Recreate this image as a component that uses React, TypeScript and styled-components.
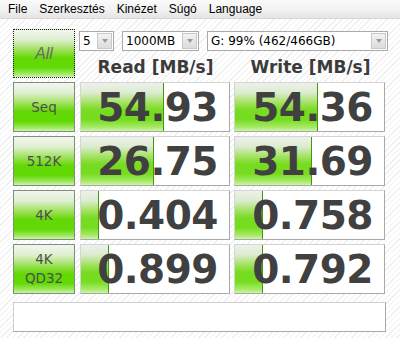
import React from "react";
import styled, { createGlobalStyle } from "styled-components";

const Global = createGlobalStyle`
  html, body { margin: 0; padding: 0; }
  body {
    width: 400px;
    height: 338px;
    overflow: hidden;
    font-family: "DejaVu Sans", sans-serif;
    background-color: #ffffff;
    background-image: repeating-linear-gradient(135deg, #ffffff 0px, #ffffff 3px, #efefef 3px, #efefef 4px);
  }
`;

const Window = styled.div`
  width: 400px;
  height: 338px;
  display: flex;
  flex-direction: column;
`;

const MenuBar = styled.div`
  height: 19px;
  display: flex;
  align-items: center;
  padding-left: 2px;
  background: linear-gradient(to bottom, #fbfbfb 0%, #f0f0f0 60%, #e4e4e4 100%);
  border-bottom: 1px solid #d6d6d6;
  box-sizing: border-box;
`;

const MenuItem = styled.span`
  font-family: "Liberation Sans", sans-serif;
  font-size: 12px;
  color: #000;
  padding: 0 6px;
`;

const Content = styled.div`
  display: flex;
  flex-direction: column;
  padding: 10px 0 0 13px;
`;

const TopRow = styled.div`
  display: flex;
  height: 49px;
`;

const GreenButton = styled.div<{ $focused?: boolean }>`
  width: 62px;
  box-sizing: border-box;
  border: 1px ${(p) => (p.$focused ? "dotted #1a1a1a" : "solid #7d8f77")};
  background: linear-gradient(to bottom, #f4f6f2 0%, #dcefcc 22%, #98e050 44%, #62d804 60%, #62da06 80%, #9ee860 93%, #ccf4a8 100%);
  display: flex;
  flex-direction: column;
  align-items: center;
  justify-content: center;
  color: #4e4e4e;
  font-family: "DejaVu Sans", sans-serif;
  font-size: 13.5px;
  line-height: 19px;
`;

const AllText = styled.span`
  font-style: italic;
  font-size: 16px;
  color: #6a6a6a;
  font-family: "Liberation Sans", sans-serif;
`;

const TopRight = styled.div`
  display: flex;
  flex-direction: column;
  margin-left: 4px;
`;

const ComboRow = styled.div`
  display: flex;
  margin-top: 2px;
  gap: 8px;
`;

const Combo = styled.div<{ $w: number }>`
  width: ${(p) => p.$w}px;
  height: 20px;
  box-sizing: border-box;
  border: 1px solid #a9a9a9;
  background: #fff;
  display: flex;
  align-items: center;
  justify-content: space-between;
  padding-left: 3px;
  padding-right: 1px;
  font-family: "DejaVu Sans", sans-serif;
  font-size: 12px;
  color: #000;
`;

const ComboArrow = styled.div`
  width: 15px;
  height: 16px;
  box-sizing: border-box;
  border: 1px solid #c8c8c8;
  background: linear-gradient(to bottom, #f2f2f2, #dcdcdc);
  display: flex;
  align-items: center;
  justify-content: center;
`;

const Tri = styled.div`
  width: 0;
  height: 0;
  border-left: 3.5px solid transparent;
  border-right: 3.5px solid transparent;
  border-top: 4px solid #9a9a9a;
`;

const HeaderRow = styled.div`
  display: flex;
  margin-top: 5px;
  padding-left: 1px;
  gap: 4px;
`;

const Header = styled.div`
  width: 151px;
  text-align: center;
  font-family: "DejaVu Sans", sans-serif;
  font-weight: bold;
  font-size: 17px;
  line-height: 22px;
  color: #3b3b3b;
`;

const Grid = styled.div`
  display: grid;
  grid-template-columns: 62px 151px 151px;
  grid-auto-rows: 50px;
  column-gap: 4px;
  row-gap: 4px;
  margin-top: 4px;
  & > :nth-child(3n + 2) { margin-left: 1px; }
`;

const ValueBox = styled.div`
  position: relative;
  box-sizing: border-box;
  border: 1px solid #d4d4d4;
  border-right-color: #a8a8a8;
  border-bottom-color: #a8a8a8;
  background: #ffffff;
  display: flex;
  align-items: center;
  justify-content: flex-end;
  padding-right: 11px;
  overflow: hidden;
`;

const Bar = styled.div`
  position: absolute;
  left: 0;
  top: 0;
  bottom: 0;
  border-right: 1px solid #3f9a10;
  background: linear-gradient(to bottom, #eef0ec 0%, #dcecd0 20%, #a6e266 40%, #78dc22 56%, #76dc1e 76%, #a6ea66 92%, #d0f4a8 100%);
`;

const Number = styled.span`
  position: relative;
  font-family: "DejaVu Sans", sans-serif;
  font-weight: bold;
  font-size: 39px;
  letter-spacing: -0.5px;
  color: #404040;
  line-height: 1;
`;

const StatusBox = styled.div`
  margin-top: 8px;
  width: 373px;
  height: 30px;
  box-sizing: border-box;
  border: 1px solid #cfcfcf;
  border-right-color: #a8a8a8;
  border-bottom-color: #a8a8a8;
  background: #ffffff;
`;

const rows = [
  { label: ["Seq"], read: "54.93", rw: 82, write: "54.36", ww: 82 },
  { label: ["512K"], read: "26.75", rw: 72, write: "31.69", ww: 76 },
  { label: ["4K"], read: "0.404", rw: 17, write: "0.758", ww: 27 },
  { label: ["4K", "QD32"], read: "0.899", rw: 27, write: "0.792", ww: 27 },
];

function Value({ text, w }: { text: string; w: number }) {
  return (
    <ValueBox>
      <Bar style={{ width: w }} />
      <Number>{text}</Number>
    </ValueBox>
  );
}

export default function App() {
  return (
    <Window>
      <Global />
      <MenuBar>
        <MenuItem>File</MenuItem>
        <MenuItem>Szerkesztés</MenuItem>
        <MenuItem>Kinézet</MenuItem>
        <MenuItem>Súgó</MenuItem>
        <MenuItem>Language</MenuItem>
      </MenuBar>
      <Content>
        <TopRow>
          <GreenButton $focused>
            <AllText>All</AllText>
          </GreenButton>
          <TopRight>
            <ComboRow>
              <Combo $w={35}>
                <span>5</span>
                <ComboArrow><Tri /></ComboArrow>
              </Combo>
              <Combo $w={77}>
                <span>1000MB</span>
                <ComboArrow><Tri /></ComboArrow>
              </Combo>
              <Combo $w={181}>
                <span>G: 99% (462/466GB)</span>
                <ComboArrow><Tri /></ComboArrow>
              </Combo>
            </ComboRow>
            <HeaderRow>
              <Header>Read [MB/s]</Header>
              <Header>Write [MB/s]</Header>
            </HeaderRow>
          </TopRight>
        </TopRow>
        <Grid>
          {rows.map((r) => (
            <React.Fragment key={r.label.join()}>
              <GreenButton>
                {r.label.map((l) => (
                  <span key={l}>{l}</span>
                ))}
              </GreenButton>
              <Value text={r.read} w={r.rw} />
              <Value text={r.write} w={r.ww} />
            </React.Fragment>
          ))}
        </Grid>
        <StatusBox />
      </Content>
    </Window>
  );
}
